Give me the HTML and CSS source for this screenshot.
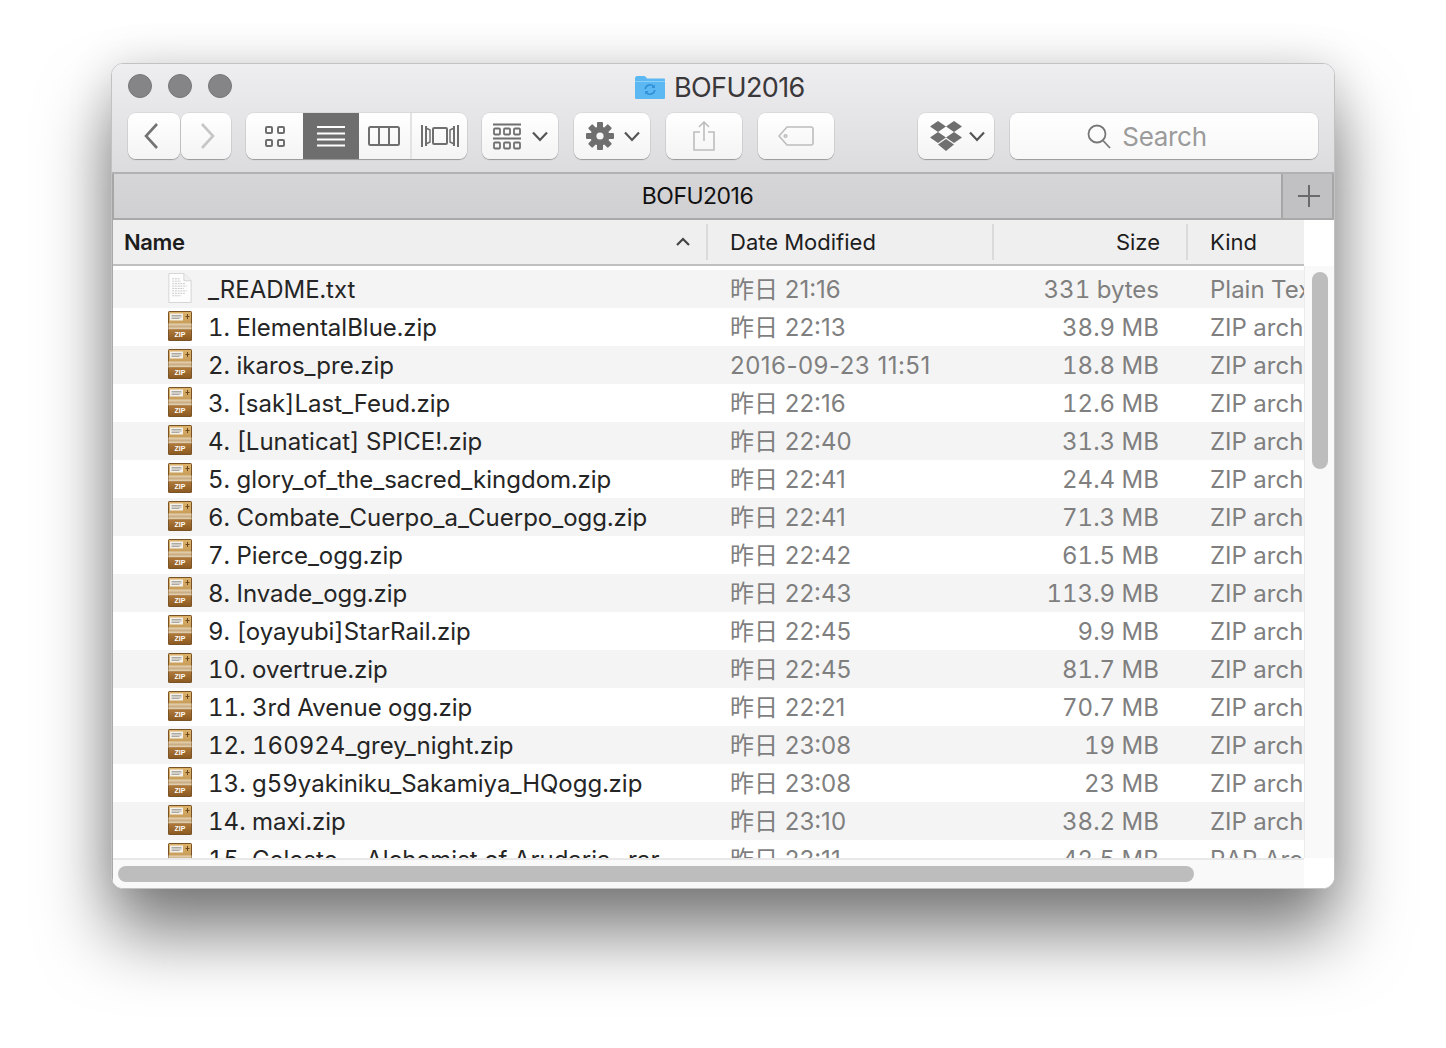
FILE: index.html
```html
<!DOCTYPE html>
<html lang="en">
<head>
<meta charset="utf-8">
<title>BOFU2016</title>
<link rel="stylesheet" href="styles.css">
</head>
<body>
<svg class="defs" width="0" height="0" aria-hidden="true">
  <defs>
    <linearGradient id="zipTop" x1="0" y1="0" x2="0" y2="1"><stop offset="0" stop-color="#ddb26a"/><stop offset="1" stop-color="#c49a58"/></linearGradient>
    <linearGradient id="zipBand" x1="0" y1="0" x2="0" y2="1"><stop offset="0" stop-color="#e9d6b6"/><stop offset=".5" stop-color="#c9ad84"/><stop offset="1" stop-color="#ecdcc0"/></linearGradient>
    <linearGradient id="zipLow" x1="0" y1="0" x2="0" y2="1"><stop offset="0" stop-color="#b07a3a"/><stop offset="1" stop-color="#8c5a22"/></linearGradient>
    <symbol id="zip" viewBox="0 0 24 30">
      <rect x="0" y="0" width="24" height="30" rx="1.5" fill="#7a5426"/>
      <rect x="1" y="1" width="22" height="13" fill="url(#zipTop)"/>
      <rect x="2" y="2.5" width="13" height="7" fill="#f4f1ea"/>
      <path d="M3.500 4.500h10M3.500 6h10M3.500 7.500h8" stroke="#8d8a84" stroke-width=".7"/>
      <path d="M19.500 3v5M17.500 5.500h4" stroke="#6d4a1d" stroke-width="1"/>
      <rect x="0.500" y="12.500" width="23" height="6" fill="url(#zipBand)"/>
      <rect x="1" y="18.500" width="22" height="10.500" fill="url(#zipLow)"/>
    </symbol>
    <symbol id="doc" viewBox="0 0 24 31">
      <path d="M.5.500H16L23.500 8V30.500H.5Z" fill="#fdfdfd" stroke="#d4d4d4"/>
      <path d="M16 .5V8h7.500" fill="#f0f0f0" stroke="#d4d4d4"/>
      <path d="M4 6h8M4 8.500h9M4 11h14M4 13.500h15M4 16h12M4 18.500h15M4 21h13M4 23.500h9" stroke="#c9c9c9" stroke-width="1" stroke-dasharray="2 .8"/>
    </symbol>
  </defs>
</svg>

<div class="window">
  <header class="titlebar">
    <div class="title-row">
      <div class="lights"><i class="light"></i><i class="light"></i><i class="light"></i></div>
      <div class="title">
        <svg class="folder" viewBox="0 0 30 23"><path d="M0 2.500Q0 0 2.500 0H9Q11 0 12 2.500H29Q30 2.500 30 3.500V22Q30 23 29 23H1Q0 23 0 22Z" fill="#5cb8f2"/><path d="M0 5H30V6H0Z" fill="#8dd0f7"/><path d="M10.200 13A4.800 4.800 0 0 1 19 11M19.800 14A4.800 4.800 0 0 1 11 16" fill="none" stroke="#2f8fd6" stroke-width="1.600"/><path d="M19.800 8.500V12H16.500ZM10.200 18.500V15H13.500Z" fill="#2f8fd6"/></svg>
        <span>BOFU2016</span>
      </div>
    </div>
    <div class="toolbar">
      <div class="nav-group">
        <div class="btn btn-back"><svg class="ic" width="18" height="28" viewBox="0 0 18 28"><path d="M15 2 4 14l11 12" fill="none" stroke="#737373" stroke-width="2.600"/></svg></div>
        <div class="btn btn-fwd"><svg class="ic" width="18" height="28" viewBox="0 0 18 28"><path d="M3 2l11 12L3 26" fill="none" stroke="#c6c6c6" stroke-width="2.600"/></svg></div>
      </div>
      <div class="view-group">
        <div class="seg seg-icons"><svg width="22" height="22" viewBox="0 0 22 22" fill="none" stroke="#6f6f6f" stroke-width="2"><rect x="2" y="2" width="6" height="6" rx="1"/><rect x="14" y="2" width="6" height="6" rx="1"/><rect x="2" y="15" width="6" height="6" rx="1"/><rect x="14" y="15" width="6" height="6" rx="1"/></svg></div>
        <div class="seg seg-list"><svg width="30" height="22" viewBox="0 0 30 22" stroke="#fff" stroke-width="2"><path d="M1 2h28M1 8.500h28M1 14.500h28M1 20.500h28"/></svg></div>
        <div class="seg seg-cols"><svg width="32" height="22" viewBox="0 0 32 22" fill="none" stroke="#6f6f6f" stroke-width="2"><rect x="1" y="2" width="30" height="18" rx="1.500"/><path d="M11 2v18M21 2v18"/></svg></div>
        <div class="seg seg-flow"><svg width="38" height="22" viewBox="0 0 38 22" fill="none" stroke="#6f6f6f" stroke-width="2"><path d="M1 0v22M5 1v20M37 0v22M33 1v20"/><rect x="12" y="3" width="14" height="16" rx="1"/><path d="M5 3l4 2v12l-4 2M33 3l-4 2v12l4 2" stroke-width="1.500"/></svg></div>
      </div>
      <div class="btn btn-menu">
        <svg width="30" height="28" viewBox="0 0 30 28" stroke="#6f6f6f"><path d="M1 2.500H29M1 16.500H29" stroke-width="2"/><g fill="none" stroke-width="1.800"><rect x="2" y="6.500" width="6" height="6" rx="1"/><rect x="12" y="6.500" width="6" height="6" rx="1"/><rect x="22" y="6.500" width="6" height="6" rx="1"/><rect x="2" y="20.500" width="6" height="6" rx="1"/><rect x="12" y="20.500" width="6" height="6" rx="1"/><rect x="22" y="20.500" width="6" height="6" rx="1"/></g></svg>
        <svg class="chev" width="16" height="11" viewBox="0 0 16 11"><path d="M1 1.500 8 9l7-7.500" fill="none" stroke="#555" stroke-width="2.200"/></svg>
      </div>
      <div class="btn btn-menu btn-action">
        <svg width="28" height="28" viewBox="0 0 28 28"><g fill="#6f6f6f"><circle cx="14" cy="14" r="9.500"/><rect x="11" y="0" width="6" height="28" rx="1"/><rect x="11" y="0" width="6" height="28" rx="1" transform="rotate(45 14 14)"/><rect x="11" y="0" width="6" height="28" rx="1" transform="rotate(90 14 14)"/><rect x="11" y="0" width="6" height="28" rx="1" transform="rotate(135 14 14)"/></g><circle cx="14" cy="14" r="3.600" fill="#f6f6f6"/></svg>
        <svg class="chev" width="16" height="11" viewBox="0 0 16 11"><path d="M1 1.500 8 9l7-7.500" fill="none" stroke="#555" stroke-width="2.200"/></svg>
      </div>
      <div class="btn btn-plain btn-share"><svg width="24" height="30" viewBox="0 0 24 30" fill="none" stroke="#bdbdbd" stroke-width="1.600"><path d="M8 11H2v18h20V11h-6M12 20V1M7 6l5-5 5 5"/></svg></div>
      <div class="btn btn-plain btn-tag"><svg width="36" height="20" viewBox="0 0 36 20" fill="none" stroke="#bdbdbd" stroke-width="1.600"><path d="M9 1H33Q35 1 35 3V17Q35 19 33 19H9L1 10Z"/><circle cx="7.500" cy="10" r="1.300"/></svg></div>
      <div class="btn btn-menu btn-dropbox">
        <svg width="32" height="30" viewBox="0 0 32 30" fill="#6f6f6f"><path d="M8 0 16 5.500 8 11 0 5.500ZM24 0 32 5.500 24 11 16 5.500ZM8 11 16 16.500 8 22 0 16.500ZM24 11 32 16.500 24 22 16 16.500ZM16 18 24 23.500 16 30 8 23.500Z"/></svg>
        <svg class="chev" width="16" height="11" viewBox="0 0 16 11"><path d="M1 1.500 8 9l7-7.500" fill="none" stroke="#555" stroke-width="2.200"/></svg>
      </div>
      <div class="search">
        <svg width="24" height="26" viewBox="0 0 24 26" fill="none" stroke="#777" stroke-width="1.800"><circle cx="10" cy="11" r="8.500"/><path d="M16 17.500 23 25"/></svg>
        <span>Search</span>
      </div>
    </div>
  </header>

  <div class="tabbar">
    <div class="tab">BOFU2016</div>
    <div class="tab-add"><svg width="24" height="24" viewBox="0 0 24 24" stroke="#6a6a6a" stroke-width="2"><path d="M12 1v22M1 12h22"/></svg></div>
  </div>

  <div class="browser">
    <div class="list-pane">
      <div class="list-head">
        <div class="hcell hname"><span>Name</span><svg width="14" height="9" viewBox="0 0 14 9"><path d="M1 8l6-6 6 6" fill="none" stroke="#444" stroke-width="2.200"/></svg></div>
        <div class="hcell hdate">Date Modified</div>
        <div class="hcell hsize">Size</div>
        <div class="hcell hkind">Kind</div>
      </div>
      <div class="rows">
        <div class="row"><div class="c-name"><svg class="file-ic"><use href="#doc"/></svg><span>_README.txt</span></div><div class="c-date">昨日 21:16</div><div class="c-size">331 bytes</div><div class="c-kind">Plain Text</div></div>
        <div class="row"><div class="c-name"><div class="zip"><svg class="file-ic"><use href="#zip"/></svg><b>ZIP</b></div><span>1. ElementalBlue.zip</span></div><div class="c-date">昨日 22:13</div><div class="c-size">38.9 MB</div><div class="c-kind">ZIP archive</div></div>
        <div class="row"><div class="c-name"><div class="zip"><svg class="file-ic"><use href="#zip"/></svg><b>ZIP</b></div><span>2. ikaros_pre.zip</span></div><div class="c-date c-date-full">2016-09-23 11:51</div><div class="c-size">18.8 MB</div><div class="c-kind">ZIP archive</div></div>
        <div class="row"><div class="c-name"><div class="zip"><svg class="file-ic"><use href="#zip"/></svg><b>ZIP</b></div><span>3. [sak]Last_Feud.zip</span></div><div class="c-date">昨日 22:16</div><div class="c-size">12.6 MB</div><div class="c-kind">ZIP archive</div></div>
        <div class="row"><div class="c-name"><div class="zip"><svg class="file-ic"><use href="#zip"/></svg><b>ZIP</b></div><span>4. [Lunaticat] SPICE!.zip</span></div><div class="c-date">昨日 22:40</div><div class="c-size">31.3 MB</div><div class="c-kind">ZIP archive</div></div>
        <div class="row"><div class="c-name"><div class="zip"><svg class="file-ic"><use href="#zip"/></svg><b>ZIP</b></div><span>5. glory_of_the_sacred_kingdom.zip</span></div><div class="c-date">昨日 22:41</div><div class="c-size">24.4 MB</div><div class="c-kind">ZIP archive</div></div>
        <div class="row"><div class="c-name"><div class="zip"><svg class="file-ic"><use href="#zip"/></svg><b>ZIP</b></div><span>6. Combate_Cuerpo_a_Cuerpo_ogg.zip</span></div><div class="c-date">昨日 22:41</div><div class="c-size">71.3 MB</div><div class="c-kind">ZIP archive</div></div>
        <div class="row"><div class="c-name"><div class="zip"><svg class="file-ic"><use href="#zip"/></svg><b>ZIP</b></div><span>7. Pierce_ogg.zip</span></div><div class="c-date">昨日 22:42</div><div class="c-size">61.5 MB</div><div class="c-kind">ZIP archive</div></div>
        <div class="row"><div class="c-name"><div class="zip"><svg class="file-ic"><use href="#zip"/></svg><b>ZIP</b></div><span>8. Invade_ogg.zip</span></div><div class="c-date">昨日 22:43</div><div class="c-size">113.9 MB</div><div class="c-kind">ZIP archive</div></div>
        <div class="row"><div class="c-name"><div class="zip"><svg class="file-ic"><use href="#zip"/></svg><b>ZIP</b></div><span>9. [oyayubi]StarRail.zip</span></div><div class="c-date">昨日 22:45</div><div class="c-size">9.9 MB</div><div class="c-kind">ZIP archive</div></div>
        <div class="row"><div class="c-name"><div class="zip"><svg class="file-ic"><use href="#zip"/></svg><b>ZIP</b></div><span>10. overtrue.zip</span></div><div class="c-date">昨日 22:45</div><div class="c-size">81.7 MB</div><div class="c-kind">ZIP archive</div></div>
        <div class="row"><div class="c-name"><div class="zip"><svg class="file-ic"><use href="#zip"/></svg><b>ZIP</b></div><span>11. 3rd Avenue ogg.zip</span></div><div class="c-date">昨日 22:21</div><div class="c-size">70.7 MB</div><div class="c-kind">ZIP archive</div></div>
        <div class="row"><div class="c-name"><div class="zip"><svg class="file-ic"><use href="#zip"/></svg><b>ZIP</b></div><span>12. 160924_grey_night.zip</span></div><div class="c-date">昨日 23:08</div><div class="c-size">19 MB</div><div class="c-kind">ZIP archive</div></div>
        <div class="row"><div class="c-name"><div class="zip"><svg class="file-ic"><use href="#zip"/></svg><b>ZIP</b></div><span>13. g59yakiniku_Sakamiya_HQogg.zip</span></div><div class="c-date">昨日 23:08</div><div class="c-size">23 MB</div><div class="c-kind">ZIP archive</div></div>
        <div class="row"><div class="c-name"><div class="zip"><svg class="file-ic"><use href="#zip"/></svg><b>ZIP</b></div><span>14. maxi.zip</span></div><div class="c-date">昨日 23:10</div><div class="c-size">38.2 MB</div><div class="c-kind">ZIP archive</div></div>
        <div class="row"><div class="c-name"><div class="zip"><svg class="file-ic"><use href="#zip"/></svg><b>ZIP</b></div><span>15. Celeste - Alchemist of Arudaria_.rar</span></div><div class="c-date">昨日 23:11</div><div class="c-size">42.5 MB</div><div class="c-kind">RAR Archive</div></div>
      </div>
      <div class="hscroll"><div class="hthumb"></div></div>
    </div>
    <div class="vscroll-pane">
      <div class="vscroll"><div class="vthumb"></div></div>
      <div class="corner"></div>
    </div>
  </div>
</div>
</body>
</html>
```

FILE: styles.css
```css
* { box-sizing: border-box; }
html, body { margin: 0; height: 100%; }
body {
  width: 1446px;
  height: 1048px;
  padding: 63px 111px 0;
  background: #fff;
  font-family: Inter, "Noto Sans CJK SC", "Liberation Sans", sans-serif;
  overflow: hidden;
}
.defs { position: absolute; }
.window {
  width: 1224px;
  height: 826px;
  border: 1px solid #c2c2c2;
  border-radius: 12px;
  overflow: hidden;
  display: flex;
  flex-direction: column;
  background: #fff;
  box-shadow: 0 45px 70px rgba(0, 0, 0, .5), 0 0 45px rgba(0, 0, 0, .13);
}
.titlebar {
  height: 110px;
  flex: none;
  background: linear-gradient(#eeedef, #dcdbdd);
  border-bottom: 2px solid #b1b1b1;
}
.title-row { height: 49px; padding-bottom: 5px; position: relative; display: flex; align-items: center; }
.lights { display: flex; gap: 16px; padding-left: 16px; }
.light {
  width: 24px; height: 24px; border-radius: 50%;
  background: #858487; border: 1px solid #777679;
}
.title {
  position: absolute;
  left: 523px; top: 9px;
  display: flex; align-items: center; gap: 9px;
  font-size: 27px; letter-spacing: -.6px; color: #3a383b;
  height: 28px;
}
.folder { width: 30px; height: 23px; }
.toolbar { display: flex; padding-left: 16px; height: 46px; }
.btn {
  height: 46px;
  background: linear-gradient(#fff, #f4f4f4);
  border-radius: 8px;
  box-shadow: 0 1px 1px rgba(0,0,0,.28), 0 0 0 .5px rgba(0,0,0,.1);
  display: flex; align-items: center; justify-content: center;
}
.nav-group { display: flex; gap: 1px; margin-right: 15px; }
.btn-back { width: 52px; padding-right: 6px; }
.btn-fwd { width: 50px; padding-left: 3px; }
.view-group {
  display: flex; width: 221px; height: 46px; border-radius: 8px; overflow: hidden;
  background: linear-gradient(#fff, #f4f4f4);
  box-shadow: 0 1px 1px rgba(0,0,0,.28), 0 0 0 .5px rgba(0,0,0,.1);
  margin-right: 15px;
}
.seg { display: flex; align-items: center; justify-content: center; height: 46px; }
.seg-icons { width: 57px; }
.seg-list { width: 56px; background: #6e6e6e; }
.seg-cols { width: 53px; border-right: 2px solid #e3e3e3; padding-right: 2px; }
.seg-flow { width: 55px; }
.btn-menu { width: 76px; gap: 10px; margin-right: 16px; }
.btn-action { padding-left: 2px; }
.btn-plain { width: 76px; margin-right: 16px; }
.btn-tag { margin-right: 84px; }
.btn-dropbox { gap: 7px; margin-right: 16px; padding-left: 2px; }
.search {
  width: 308px; height: 46px;
  background: linear-gradient(#fff, #f7f7f7);
  border-radius: 8px;
  box-shadow: 0 1px 1px rgba(0,0,0,.28), 0 0 0 .5px rgba(0,0,0,.1);
  display: flex; align-items: center; justify-content: center; gap: 11px;
  font-size: 26px; letter-spacing: -.3px; color: #9b9b9b; padding-right: 34px;
}
.tabbar {
  height: 46px; flex: none; display: flex;
  background: linear-gradient(#d6d5d7, #d0cfd1);
  border-bottom: 2px solid #a9a9a9;
  border-left: 2px solid #a6a6a6;
}
.tab {
  flex: 1; display: flex; align-items: center; justify-content: center;
  font-size: 23px; color: #111; letter-spacing: -.5px;
}
.tab-add {
  width: 53px; flex: none;
  background: #c1c0c2;
  border-left: 2px solid #a6a6a6;
  border-right: 2px solid #a6a6a6;
  padding-left: 3px;
  display: flex; align-items: center; justify-content: center;
}
.browser { flex: 1; min-height: 0; display: flex; border-left: 1px solid #a8a8a8; }
.list-pane { width: 1191px; flex: none; display: flex; flex-direction: column; min-height: 0; }
.list-head {
  height: 46px; flex: none; display: grid;
  grid-template-columns: 595px 286px 194px 116px;
  background: #efefef;
  border-bottom: 2px solid #bfbfbf;
  align-items: center;
  font-size: 22px; color: #1d1d1d;
}
.hcell { height: 36px; display: flex; align-items: center; padding-left: 22px; border-right: 2px solid #dadada; margin-top: -1px; }
.hname { padding-left: 11px; padding-right: 16px; justify-content: space-between; font-weight: 600; letter-spacing: -.4px; }
.hsize { justify-content: flex-end; padding-right: 26px; }
.hkind { border-right: 0; }
.rows { flex: 1; min-height: 0; overflow: hidden; padding-top: 4px; background: #fff; }
.row {
  height: 38px; display: grid;
  grid-template-columns: 594px 286px 194px 117px;
  align-items: center;
  font-size: 24px; line-height: 36px; color: #7f7f7f;
  font-variant-numeric: tabular-nums;
}
.row:nth-child(odd) { background: #f4f4f4; }
.c-name { display: flex; align-items: center; padding-left: 55px; gap: 16px; color: #252525; white-space: nowrap; }
.c-name span, .c-date, .c-size, .c-kind { padding-top: 2px; }
.c-date { padding-left: 23px; white-space: nowrap; font-variant-numeric: normal; }
.c-date-full { letter-spacing: .5px; }
.c-size { text-align: right; padding-right: 28px; white-space: nowrap; }
.c-kind { padding-left: 23px; white-space: nowrap; overflow: hidden; }
.file-ic { width: 24px; height: 30px; display: block; flex: none; }
.c-name > .file-ic, .zip { margin-bottom: 2px; }
.zip { position: relative; width: 24px; height: 30px; flex: none; }
.zip b {
  position: absolute; left: 0; right: 0; bottom: 2px;
  text-align: center;
  font: 700 7px/9px "Liberation Sans", sans-serif; color: #fff;
}
.hscroll { height: 30px; flex: none; background: #f9f9f9; border-top: 2px solid #e8e8e8; padding: 6px 0 0 5px; }
.hthumb { width: 1076px; height: 16px; border-radius: 8px; background: #bdbdbd; }
.vscroll-pane { flex: 1; display: flex; flex-direction: column; padding-top: 46px; min-height: 0; }
.vscroll { flex: 1; background: #f9f9f9; border-left: 1px solid #ececec; padding: 6px 0 0 7px; }
.vthumb { width: 16px; height: 197px; border-radius: 8px; background: #bdbdbd; }
.corner { height: 30px; flex: none; background: #fff; }
```
